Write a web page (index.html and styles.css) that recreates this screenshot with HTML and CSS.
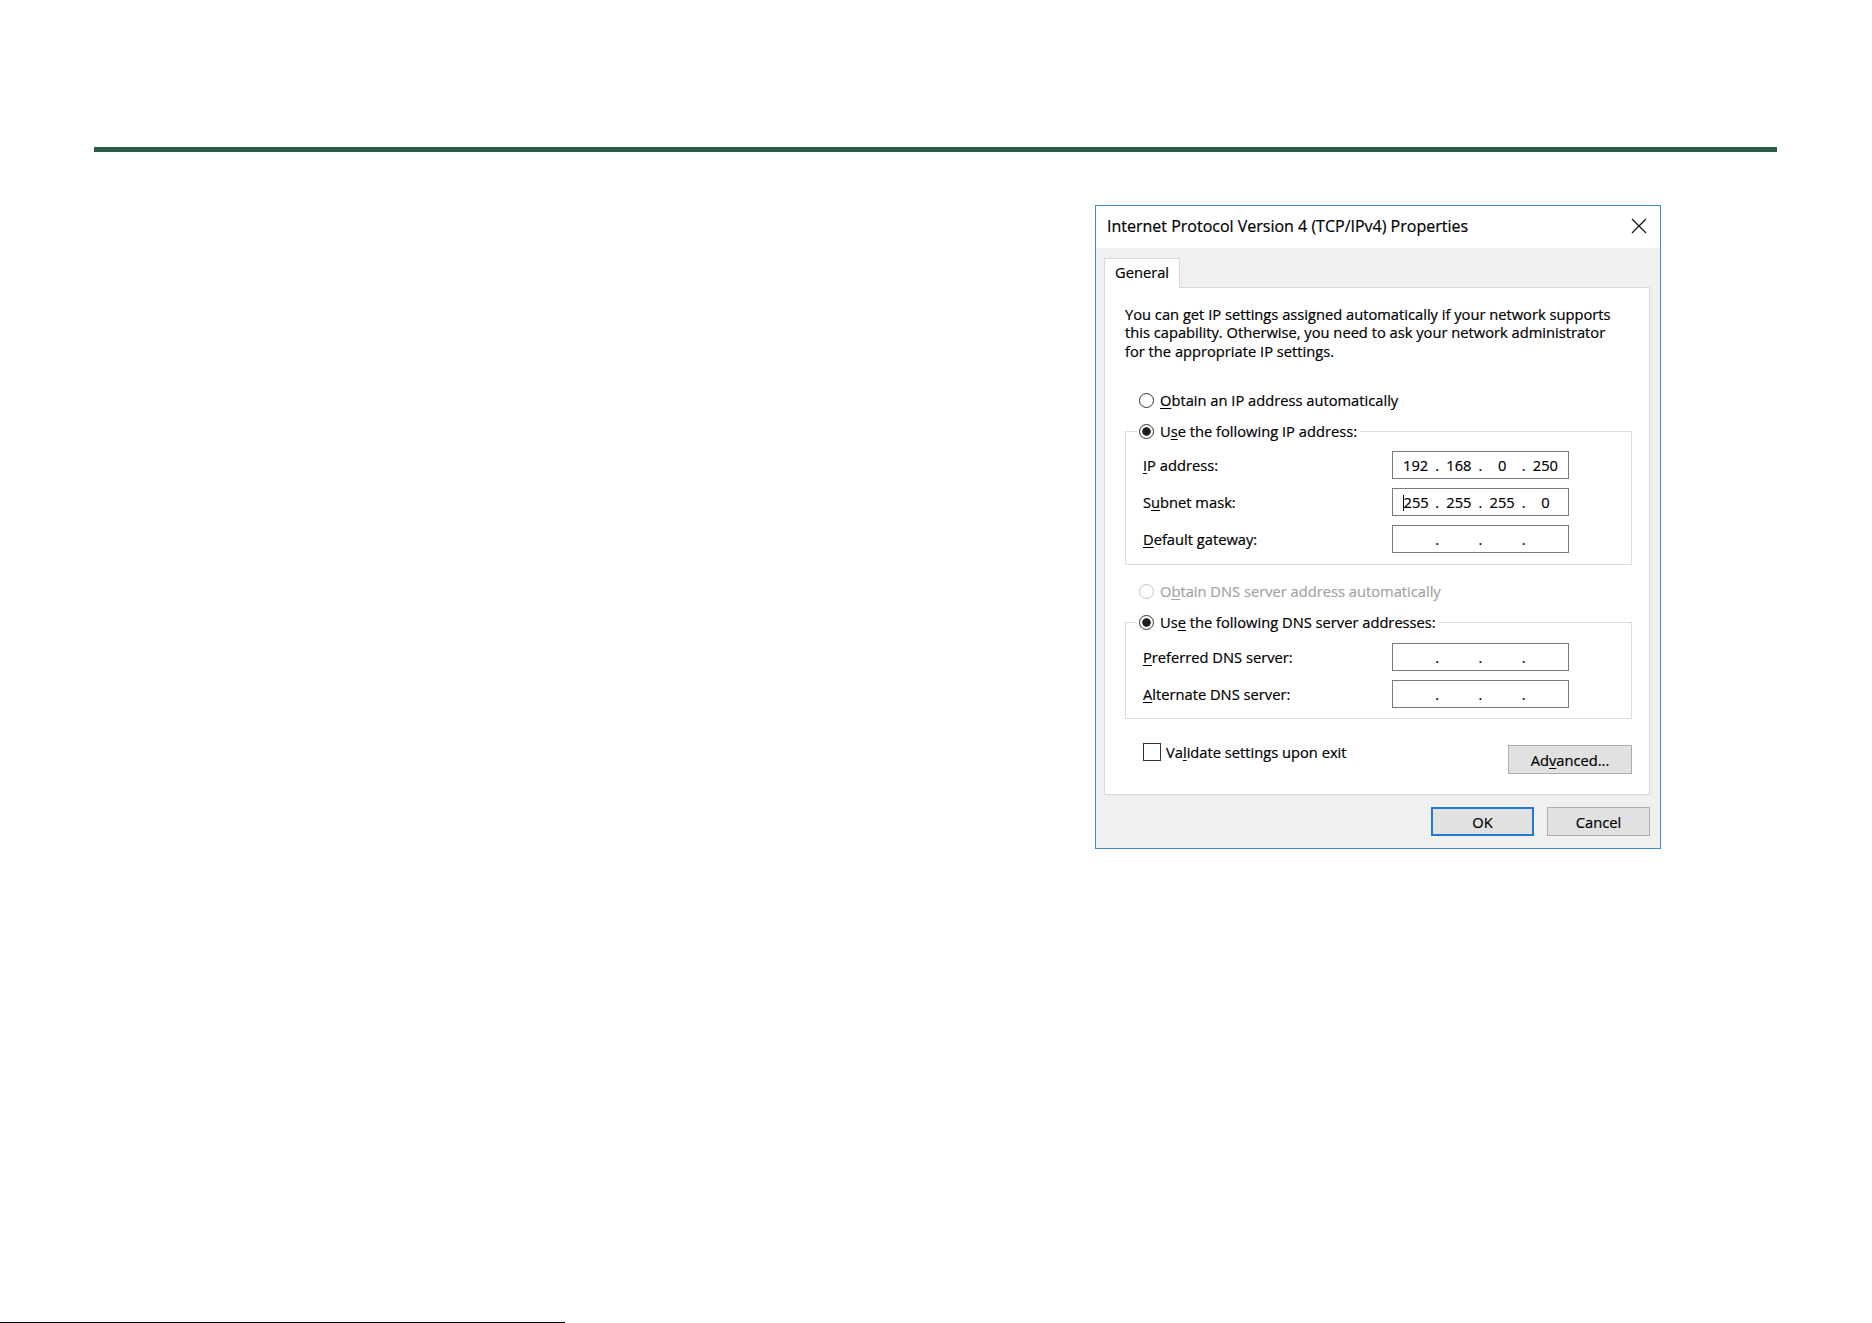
FILE: index.html
```html
<!DOCTYPE html>
<html lang="en">
<head>
    <meta charset="UTF-8">
    <meta name="viewport" content="width=device-width, initial-scale=1.0">
    <title>Internet Protocol Version 4 (TCP/IPv4) Properties</title>
    <link rel="stylesheet" href="styles.css">
</head>
<body>
    <div class="page">
        <div class="rule"></div>

        <div class="dialog">
            <div class="titlebar">
                <span class="title">Internet Protocol Version 4 (TCP/IPv4) Properties</span>
                <span class="close">
                    <svg width="16" height="16" viewBox="0 0 16 16"><path d="M1 1L15 15M15 1L1 15" stroke="#111" stroke-width="1.2" fill="none"/></svg>
                </span>
            </div>

            <div class="client">
                <div class="tabs"><span class="tab">General</span></div>

                <div class="panel">
                    <p class="intro">You can get IP settings assigned automatically if your network supports<br>this capability. Otherwise, you need to ask your network administrator<br>for the appropriate IP settings.</p>

                    <div class="radio standalone"><span class="circle"></span><span><u>O</u>btain an IP address automatically</span></div>

                    <fieldset class="group">
                        <legend><span class="radio"><span class="circle on"></span><span>U<u>s</u>e the following IP address:</span></span></legend>
                        <div class="field-row">
                            <span class="label"><u>I</u>P address:</span>
                            <div class="ip">
                                <span class="oct">192</span><span class="dot">.</span>
                                <span class="oct">168</span><span class="dot">.</span>
                                <span class="oct">0</span><span class="dot">.</span>
                                <span class="oct">250</span>
                            </div>
                        </div>
                        <div class="field-row">
                            <span class="label">S<u>u</u>bnet mask:</span>
                            <div class="ip">
                                <span class="oct"><span class="caret"></span>255</span><span class="dot">.</span>
                                <span class="oct">255</span><span class="dot">.</span>
                                <span class="oct">255</span><span class="dot">.</span>
                                <span class="oct">0</span>
                            </div>
                        </div>
                        <div class="field-row">
                            <span class="label"><u>D</u>efault gateway:</span>
                            <div class="ip">
                                <span class="oct"></span><span class="dot">.</span>
                                <span class="oct"></span><span class="dot">.</span>
                                <span class="oct"></span><span class="dot">.</span>
                                <span class="oct"></span>
                            </div>
                        </div>
                    </fieldset>

                    <div class="radio standalone disabled"><span class="circle"></span><span>O<u>b</u>tain DNS server address automatically</span></div>

                    <fieldset class="group dns">
                        <legend><span class="radio"><span class="circle on"></span><span>Us<u>e</u> the following DNS server addresses:</span></span></legend>
                        <div class="field-row">
                            <span class="label"><u>P</u>referred DNS server:</span>
                            <div class="ip">
                                <span class="oct"></span><span class="dot">.</span>
                                <span class="oct"></span><span class="dot">.</span>
                                <span class="oct"></span><span class="dot">.</span>
                                <span class="oct"></span>
                            </div>
                        </div>
                        <div class="field-row">
                            <span class="label"><u>A</u>lternate DNS server:</span>
                            <div class="ip">
                                <span class="oct"></span><span class="dot">.</span>
                                <span class="oct"></span><span class="dot">.</span>
                                <span class="oct"></span><span class="dot">.</span>
                                <span class="oct"></span>
                            </div>
                        </div>
                    </fieldset>

                    <div class="options">
                        <label class="check"><span class="box"></span><span>Va<u>l</u>idate settings upon exit</span></label>
                        <button class="btn advanced">Ad<u>v</u>anced...</button>
                    </div>
                </div>

                <div class="actions">
                    <button class="btn ok">OK</button>
                    <button class="btn cancel">Cancel</button>
                </div>
            </div>
        </div>
    </div>

    <div class="footer-line"></div>
</body>
</html>
```

FILE: styles.css
```css
* {
    box-sizing: border-box;
}
html, body {
    margin: 0;
    padding: 0;
}
body {
    background: #fff;
    color: #000;
    font-family: "Open Sans", "Noto Sans", sans-serif;
    font-size: 14.7px;
    min-height: 100vh;
    display: flex;
    flex-direction: column;
}
.page {
    padding-top: 147px;
}
.rule {
    margin-left: 94px;
    width: 1683px;
    height: 5px;
    background: #2a5c47;
}
.footer-line {
    margin-top: auto;
    width: 565px;
    height: 1px;
    background: #000;
}

/* dialog window */
.dialog {
    margin: 53px 0 0 1095px;
    width: 566px;
    border: 1px solid #3d8bd8;
    background: #f0f0f0;
    -webkit-text-stroke: 0.2px currentColor;
}
.titlebar {
    height: 42px;
    background: #fff;
    display: flex;
    align-items: center;
    justify-content: space-between;
    padding: 0 0 3px 11px;
}
.title {
    font-size: 16px;
}
.close {
    width: 42px;
    height: 32px;
    display: flex;
    align-items: center;
    justify-content: center;
}
.client {
    padding: 10px 10px 12px 8px;
}
.tabs {
    display: flex;
}
.tab {
    position: relative;
    z-index: 1;
    background: #fff;
    border: 1px solid #d9d9d9;
    border-bottom: none;
    padding: 3px 10px 6px;
    line-height: 20px;
    margin-bottom: -1px;
}
.panel {
    background: #fff;
    border: 1px solid #d9d9d9;
    padding: 17px 17px 20px 20px;
}
.intro {
    margin: 0;
    line-height: 18.4px;
}
u {
    text-decoration-thickness: 1px;
    text-underline-offset: 2px;
}

/* radio buttons */
.radio {
    display: flex;
    align-items: center;
    gap: 6px;
    line-height: 20px;
}
.radio.standalone {
    margin-left: 14px;
    margin-top: 30px;
}
.radio.disabled {
    color: #a3a3a3;
    margin-top: 16px;
}
.circle {
    width: 15px;
    height: 15px;
    border: 1px solid #333;
    border-radius: 50%;
    background: #fff;
    flex: none;
}
.circle.on {
    background: radial-gradient(circle, #1e1e1e 0 3.9px, #fff 4.6px);
}
.disabled .circle {
    border-color: #c4c4c4;
}

/* group boxes */
.group {
    margin: 11px 0 0;
    padding: 10px 0 11px 17px;
    border: 1px solid #dcdcdc;
    min-width: 0;
}
.group.dns {
    margin-top: 11px;
    padding-top: 11px;
    padding-bottom: 10px;
}
.group legend {
    padding: 0 3px 0 2px;
    margin-left: -6px;
}
.field-row {
    display: flex;
    align-items: center;
    height: 28px;
}
.field-row + .field-row {
    margin-top: 9px;
}
.label {
    width: 249px;
}
.ip {
    width: 177px;
    height: 28px;
    border: 1px solid #7a7a7a;
    background: #fff;
    display: flex;
    align-items: center;
    padding: 0 4px 0 4px;
}
.oct {
    flex: 1;
    text-align: center;
}
.dot {
    width: 6px;
    text-align: center;
}
.caret {
    display: inline-block;
    width: 1px;
    height: 16px;
    background: #000;
    vertical-align: -3px;
}

/* checkbox and buttons */
.options {
    display: flex;
    justify-content: space-between;
    align-items: flex-start;
    margin-top: 23px;
}
.check {
    display: flex;
    align-items: center;
    gap: 5px;
    line-height: 20px;
    margin-left: 18px;
}
.box {
    width: 18px;
    height: 18px;
    border: 1px solid #333;
    background: #fff;
}
.btn {
    font: inherit;
    color: #000;
    background: #e1e1e1;
    border: 1px solid #adadad;
    padding: 0;
    height: 29px;
}
.advanced {
    width: 124px;
    margin-top: 3px;
}
.actions {
    display: flex;
    justify-content: flex-end;
    gap: 13px;
    margin-top: 12px;
}
.ok {
    width: 103px;
    border: 2px solid #1f7ad3;
}
.cancel {
    width: 103px;
}
```
